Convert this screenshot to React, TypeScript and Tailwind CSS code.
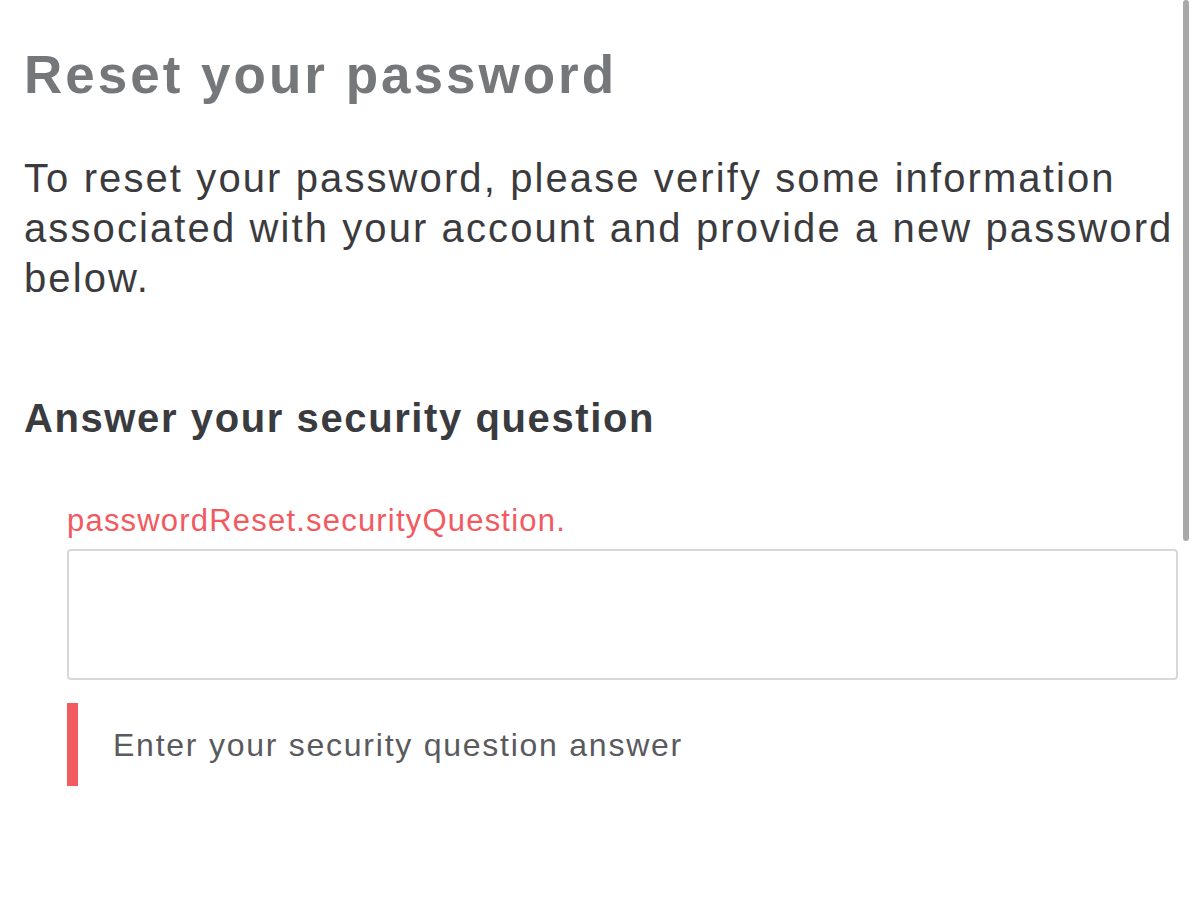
import React from "react";

export default function App() {
  return (
    <div className="relative w-[1200px] h-[898px] overflow-hidden bg-white" style={{ fontFamily: '"Liberation Sans", Arial, sans-serif' }}>
      <div className="pl-[24px] pt-[43px]">
        <h1 className="text-[53px] font-bold leading-[64px] text-[#75787b] tracking-[3px] whitespace-nowrap">Reset your password</h1>
        <p className="mt-[46px] w-[1172px] text-[40px] leading-[50px] text-[#3b3b3e] tracking-[2.1px]">
          To reset your password, please verify some information associated with your account and provide a new password below.
        </p>
        <h2 className="mt-[90px] text-[40px] font-bold leading-[50px] text-[#3a3b3e] tracking-[1.6px] whitespace-nowrap">Answer your security question</h2>
        <div className="ml-[43px] mt-[58px]">
          <div className="text-[31px] leading-[40px] text-[#f15a60] tracking-[1.2px] whitespace-nowrap">passwordReset.securityQuestion.</div>
          <div className="mt-[8px] h-[131px] w-[1111px] rounded-[4px] border-2 border-[#d8d8d8] bg-white" />
          <div className="mt-[23px] flex h-[83px] items-center">
            <div className="h-full w-[11px] bg-[#f25b60]" />
            <span className="ml-[35px] text-[32px] leading-[40px] text-[#5a5a5e] tracking-[1.75px] whitespace-nowrap">Enter your security question answer</span>
          </div>
        </div>
      </div>
      <div className="absolute right-[11px] top-0 h-[541px] w-[6px] rounded-full bg-[#a8a8a8]" />
    </div>
  );
}
